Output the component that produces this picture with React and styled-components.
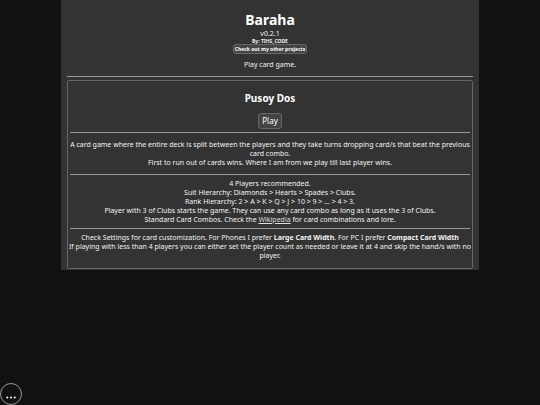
import React from "react";
import styled, { createGlobalStyle } from "styled-components";

const GlobalStyle = createGlobalStyle`
  * { box-sizing: border-box; }
  body {
    margin: 0;
    background: #111;
    color: #f2f2f2;
    font-family: "Noto Sans", sans-serif;
    font-size: 7px;
    line-height: 9px;
    text-align: center;
  }
`;

const Page = styled.main`
  max-width: 418px;
  margin: 0 auto;
  padding: 11px 6px 1px;
  background: #333;
`;

const Header = styled.header`
  display: flex;
  flex-direction: column;
  align-items: center;
  padding-bottom: 7px;
  border-bottom: 1px solid #999;
`;

const Title = styled.h1`
  margin: 0;
  color: #fff;
  font-size: 14px;
  line-height: 18px;
`;

const Version = styled.span`
  line-height: 9px;
`;

const Author = styled.strong`
  font-size: 5px;
  line-height: 6px;
`;

const Button = styled.button`
  padding: ${(p) => (p.$small ? "0 1px" : "2px 3px")};
  border: 1px solid #666;
  border-radius: 3px;
  background: #444;
  color: #fff;
  font-family: inherit;
  font-size: ${(p) => (p.$small ? "5px" : "8px")};
  font-weight: ${(p) => (p.$small ? 700 : 400)};
  line-height: ${(p) => (p.$small ? "8px" : "10px")};
  cursor: pointer;
`;

const Tagline = styled.p`
  margin: 6px 0 0;
`;

const Game = styled.article`
  margin-top: 3px;
  padding-bottom: 4px;
  border: 1px solid #666;
  border-radius: 2px;
`;

const GameHead = styled.div`
  display: flex;
  flex-direction: column;
  align-items: center;
  gap: 8px;
  padding: 10px 0 3px;
`;

const GameTitle = styled.h2`
  margin: 0;
  color: #fff;
  font-size: 10px;
  line-height: 14px;
`;

const Rule = styled.hr`
  margin: 0 2px;
  border: 0;
  border-top: 1px solid #999;
`;

const Section = styled.section`
  padding: ${(p) => (p.$roomy ? "7px 0" : "4px 0")};
`;

const Line = styled.p`
  margin: 0;
`;

const Link = styled.a`
  color: #ddd;
`;

const MenuButton = styled.button`
  position: fixed;
  left: 0;
  bottom: 0;
  display: grid;
  place-items: center;
  width: 22px;
  height: 22px;
  padding: 0;
  border: 1px solid #999;
  border-radius: 50%;
  background: #111;
  color: #fff;
  cursor: pointer;
`;

export default function App() {
  return (
    <>
      <GlobalStyle />
      <Page>
        <Header>
          <Title>Baraha</Title>
          <Version>v0.2.1</Version>
          <Author>By: TIHS_CODE</Author>
          <Button type="button" $small>Check out my other projects</Button>
          <Tagline>Play card game.</Tagline>
        </Header>
        <Game>
          <GameHead>
            <GameTitle>Pusoy Dos</GameTitle>
            <Button type="button">Play</Button>
          </GameHead>
          <Rule />
          <Section $roomy>
            <Line>
              A card game where the entire deck is split between the players and they take turns
              dropping card/s that beat the previous card combo.
            </Line>
            <Line>First to run out of cards wins. Where I am from we play till last player wins.</Line>
          </Section>
          <Rule />
          <Section>
            <Line>4 Players recommended.</Line>
            <Line>Suit Hierarchy: Diamonds &gt; Hearts &gt; Spades &gt; Clubs.</Line>
            <Line>Rank Hierarchy: 2 &gt; A &gt; K &gt; Q &gt; J &gt; 10 &gt; 9 &gt; ... &gt; 4 &gt; 3.</Line>
            <Line>
              Player with 3 of Clubs starts the game. They can use any card combo as long as it
              uses the 3 of Clubs.
            </Line>
            <Line>
              Standard Card Combos. Check the <Link href="#wikipedia">Wikipedia</Link> for card
              combinations and lore.
            </Line>
          </Section>
          <Rule />
          <Section>
            <Line>
              Check Settings for card customization. For Phones I prefer{" "}
              <strong>Large Card Width</strong>. For PC I prefer <strong>Compact Card Width</strong>
            </Line>
            <Line>
              If playing with less than 4 players you can either set the player count as needed or
              leave it at 4 and skip the hand/s with no player.
            </Line>
          </Section>
        </Game>
      </Page>
      <MenuButton type="button" aria-label="Menu">
        <svg width="12" height="12" viewBox="0 0 12 12" fill="currentColor" aria-hidden="true">
          <circle cx="2.3" cy="9.5" r="1" />
          <circle cx="6" cy="9.5" r="1" />
          <circle cx="9.7" cy="9.5" r="1" />
        </svg>
      </MenuButton>
    </>
  );
}
